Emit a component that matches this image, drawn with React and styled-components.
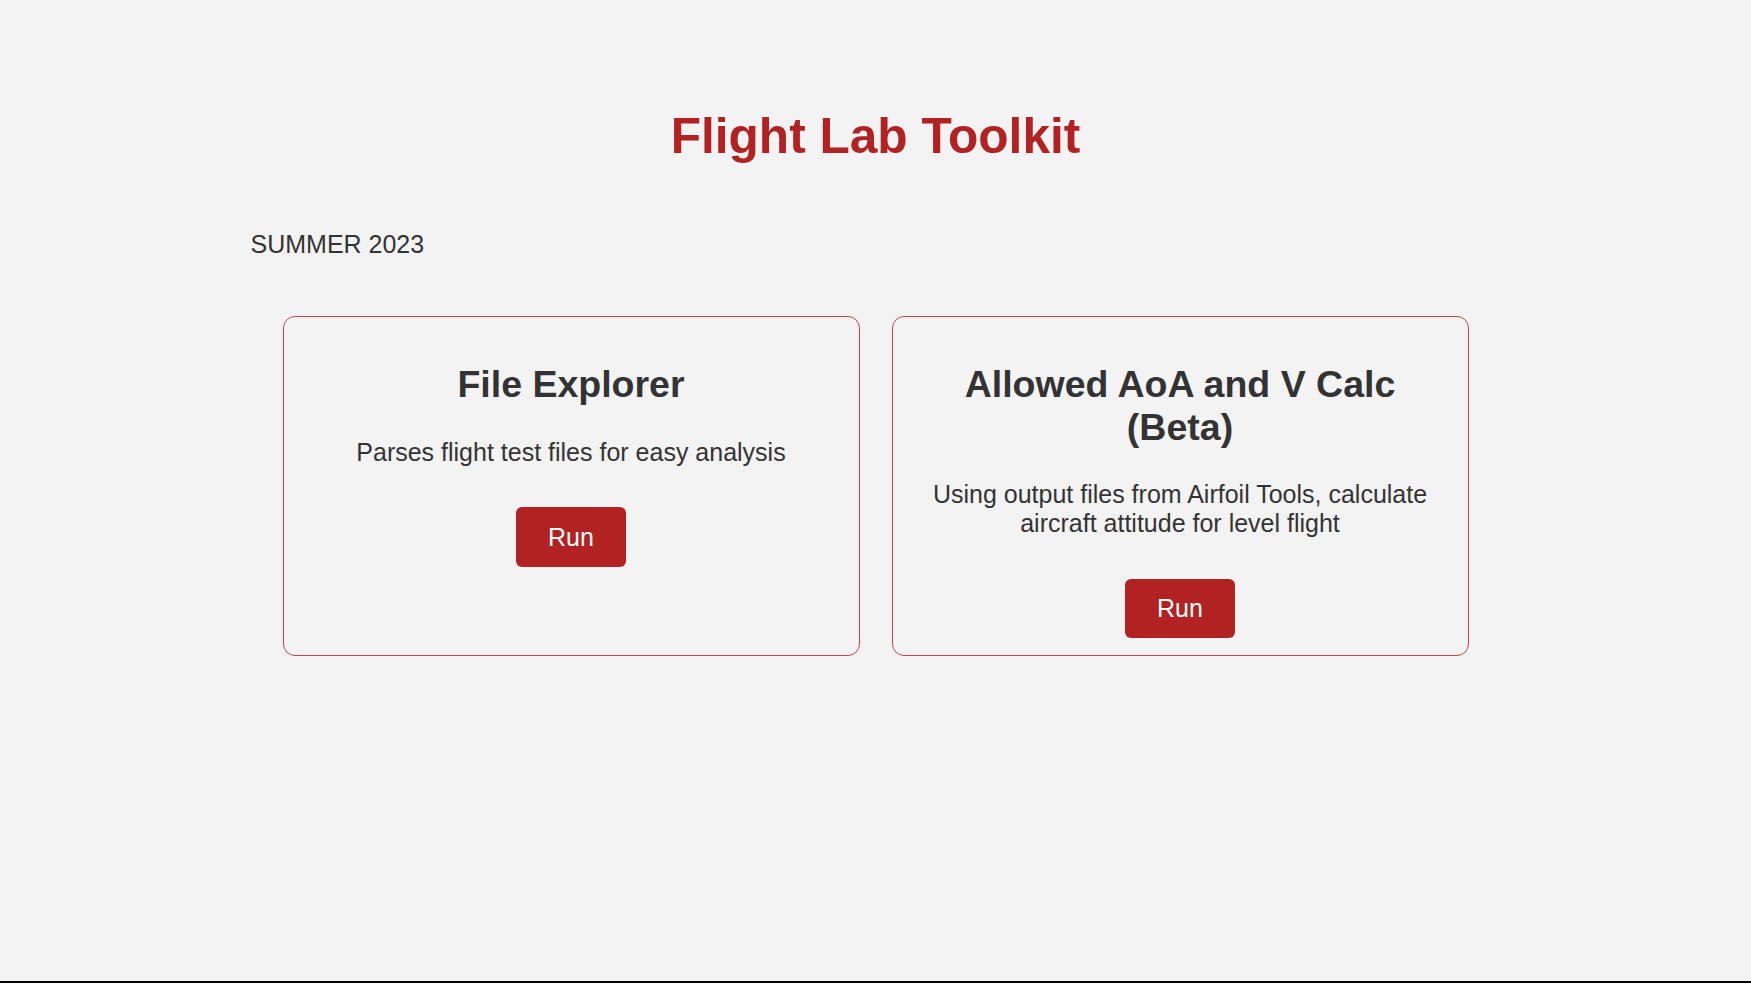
import React from "react";
import styled, { createGlobalStyle } from "styled-components";

const GlobalStyle = createGlobalStyle`
  html {
    background: #000;
  }
  body {
    margin: 0;
    min-height: calc(100vh - 2px);
    background: #f3f3f3;
    font-family: "Liberation Sans", Arial, sans-serif;
    color: #333;
  }
`;

const Page = styled.main`
  width: 1250px;
  margin: 0 auto;
  padding-top: 108px;
`;

const Title = styled.h1`
  margin: 0;
  text-align: center;
  font-size: 49.6px;
  line-height: 1.15;
  font-weight: 700;
  color: #b22222;
`;

const Term = styled.h3`
  margin: 65px 0 0;
  font-size: 25px;
  line-height: 1.15;
  font-weight: 400;
  color: #333;
`;

const Grid = styled.section`
  display: grid;
  grid-template-columns: 1fr 1fr;
  gap: 32px;
  padding: 0 32px;
  margin-top: 57px;
`;

const Card = styled.article`
  display: flex;
  flex-direction: column;
  align-items: center;
  text-align: center;
  border: 1px solid #c9474a;
  border-radius: 12px;
  padding: 46px 24px 15px;
  min-height: 340px;
  box-sizing: border-box;
`;

const CardTitle = styled.h2`
  margin: 0;
  font-size: 37.5px;
  line-height: 1.14;
  font-weight: 700;
  color: #333;
`;

const CardText = styled.p`
  margin: 32px 0 0;
  font-size: 25px;
  line-height: 1.15;
  color: #333;
`;

const RunButton = styled.button`
  margin-top: 41px;
  padding: 15.3px 32.5px;
  border: none;
  border-radius: 6px;
  background: #b22222;
  color: #fff;
  font-family: "Liberation Sans", Arial, sans-serif;
  font-size: 25px;
  line-height: 1.15;
  cursor: pointer;
`;

const tools = [
  {
    title: "File Explorer",
    text: "Parses flight test files for easy analysis",
  },
  {
    title: "Allowed AoA and V Calc (Beta)",
    text: "Using output files from Airfoil Tools, calculate aircraft attitude for level flight",
  },
];

export default function App() {
  return (
    <>
      <GlobalStyle />
      <Page>
        <Title>Flight Lab Toolkit</Title>
        <Term>SUMMER 2023</Term>
        <Grid>
          {tools.map((t) => (
            <Card key={t.title}>
              <CardTitle>{t.title}</CardTitle>
              <CardText>{t.text}</CardText>
              <RunButton>Run</RunButton>
            </Card>
          ))}
        </Grid>
      </Page>
    </>
  );
}
